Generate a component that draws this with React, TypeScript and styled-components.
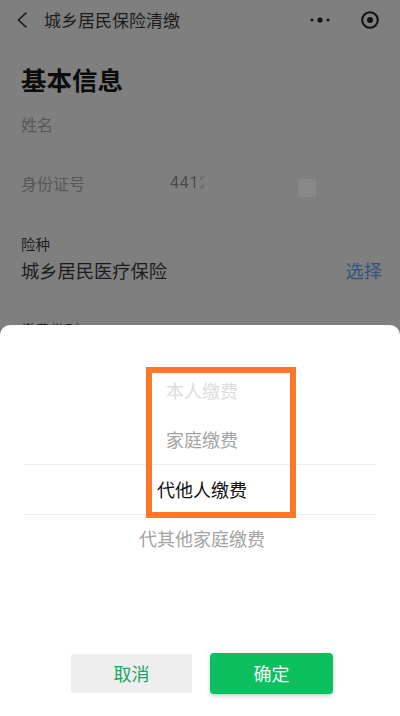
import React from "react";
import styled, { createGlobalStyle } from "styled-components";

const Global = createGlobalStyle`
  html, body { margin: 0; padding: 0; background: #7f7f7f; }
  * { box-sizing: border-box; }
`;

const cjk = `"Noto Sans CJK SC", "Noto Sans", sans-serif`;

const Screen = styled.div`
  position: relative;
  width: 400px;
  height: 716px;
  overflow: hidden;
  background: #7f7f7f;
  font-family: ${cjk};
  color: #141414;
`;

const NavBar = styled.div`
  display: flex;
  align-items: center;
  height: 40px;
  padding: 0 21px 0 16px;
`;

const BackIcon = styled.svg`
  width: 12px;
  height: 18px;
  margin-right: 16px;
  flex: none;
`;

const NavTitle = styled.div`
  flex: 1;
  font-size: 17px;
  line-height: 24px;
  color: #1c1c1c;
`;

const MoreIcon = styled.svg`
  width: 20px;
  height: 6px;
  margin-right: 31px;
  flex: none;
`;

const TargetIcon = styled.svg`
  width: 18px;
  height: 18px;
  flex: none;
`;

const Content = styled.div`
  padding: 21px 18px 0 21px;
`;

const Heading = styled.h1`
  margin: 0;
  font-size: 25.5px;
  line-height: 36px;
  font-weight: 700;
  color: #0c0c0c;
`;

const Field = styled.div`
  display: flex;
  align-items: center;
  height: 24px;
  margin-top: ${(p: { $top: number }) => p.$top}px;
`;

const MutedLabel = styled.div`
  width: 149px;
  font-size: 16px;
  line-height: 24px;
  color: #575757;
`;

const IdValue = styled.div`
  width: 128px;
  font-family: "Roboto", sans-serif;
  font-size: 16px;
  line-height: 24px;
  letter-spacing: 0.8px;
  background: linear-gradient(90deg, #4a4a4a 0, #4a4a4a 28px, #8a8a8a 37px);
  background-clip: text;
  -webkit-background-clip: text;
  color: transparent;
`;

const Square = styled.div`
  width: 18px;
  height: 18px;
  margin-top: 10px;
  background: #888888;
`;

const SmallLabel = styled.div`
  margin-top: 38px;
  font-size: 14.5px;
  line-height: 22px;
  color: #1e1e1e;
`;

const ValueRow = styled.div`
  display: flex;
  justify-content: space-between;
  align-items: center;
  margin-top: 2px;
  font-size: 18.25px;
  line-height: 26px;
`;

const ValueText = styled.div`
  color: #1c1c1c;
`;

const SelectLink = styled.div`
  color: #33527f;
`;

const ClippedLabel = styled.div`
  margin-top: 36px;
  font-size: 14.5px;
  line-height: 22px;
  color: #1e1e1e;
`;

const Sheet = styled.div`
  position: absolute;
  left: 0;
  right: 0;
  bottom: 0;
  height: 391px;
  background: #fff;
  border-radius: 10px 10px 0 0;
  display: flex;
  flex-direction: column;
  align-items: center;
`;

const Picker = styled.div`
  position: relative;
  width: 352px;
  margin-top: 41px;
  display: flex;
  flex-direction: column;
  align-items: center;
`;

const PickerBand = styled.div`
  position: absolute;
  left: 0;
  right: 0;
  top: 98px;
  height: 51px;
  border-top: 1px solid #eeeeee;
  border-bottom: 1px solid #eeeeee;
`;

const PickerItem = styled.div<{ $tone: string }>`
  position: relative;
  height: 49.3px;
  padding-left: 4px;
  font-size: 18px;
  line-height: 49.3px;
  color: ${(p) => p.$tone};
`;

const Buttons = styled.div`
  position: absolute;
  left: 71px;
  top: 328px;
  display: flex;
  align-items: center;
  gap: 18px;
`;

const CancelButton = styled.div`
  width: 121px;
  height: 39px;
  border-radius: 2px;
  background: #eeeeee;
  color: #1fa565;
  font-size: 18px;
  line-height: 39px;
  text-align: center;
`;

const ConfirmButton = styled.div`
  width: 123px;
  height: 41px;
  border-radius: 4px;
  background: #0cbf5f;
  color: #f2fff7;
  font-size: 18px;
  line-height: 41px;
  text-align: center;
  box-shadow: 0 2px 4px rgba(0, 90, 40, 0.25);
`;

const Annotation = styled.div`
  position: absolute;
  left: 146px;
  top: 367px;
  width: 150px;
  height: 151px;
  border: 6.5px solid #fc772e;
`;

export default function App() {
  return (
    <Screen>
      <Global />
      <NavBar>
        <BackIcon viewBox="0 0 12 18">
          <path d="M10.5 1.5 2.5 9l8 7.5" fill="none" stroke="#1a1a1a" strokeWidth="1.6" />
        </BackIcon>
        <NavTitle>城乡居民保险清缴</NavTitle>
        <MoreIcon viewBox="0 0 20 6">
          <circle cx="2" cy="3" r="1.5" fill="#111" />
          <circle cx="10" cy="3" r="2.6" fill="#111" />
          <circle cx="18" cy="3" r="1.5" fill="#111" />
        </MoreIcon>
        <TargetIcon viewBox="0 0 18 18">
          <circle cx="9" cy="9" r="7.8" fill="none" stroke="#111" strokeWidth="2" />
          <circle cx="9" cy="9" r="3" fill="#111" />
        </TargetIcon>
      </NavBar>
      <Content>
        <Heading>基本信息</Heading>
        <Field $top={15}>
          <MutedLabel>姓名</MutedLabel>
        </Field>
        <Field $top={35}>
          <MutedLabel>身份证号</MutedLabel>
          <IdValue>4412</IdValue>
          <Square />
        </Field>
        <SmallLabel>险种</SmallLabel>
        <ValueRow>
          <ValueText>城乡居民医疗保险</ValueText>
          <SelectLink>选择</SelectLink>
        </ValueRow>
        <ClippedLabel>缴费类别</ClippedLabel>
      </Content>
      <Sheet>
        <Picker>
          <PickerBand />
          <PickerItem $tone="#dcdcdc">本人缴费</PickerItem>
          <PickerItem $tone="#a3a3a3">家庭缴费</PickerItem>
          <PickerItem $tone="#111111">代他人缴费</PickerItem>
          <PickerItem $tone="#a3a3a3">代其他家庭缴费</PickerItem>
        </Picker>
        <Buttons>
          <CancelButton>取消</CancelButton>
          <ConfirmButton>确定</ConfirmButton>
        </Buttons>
      </Sheet>
      <Annotation />
    </Screen>
  );
}
